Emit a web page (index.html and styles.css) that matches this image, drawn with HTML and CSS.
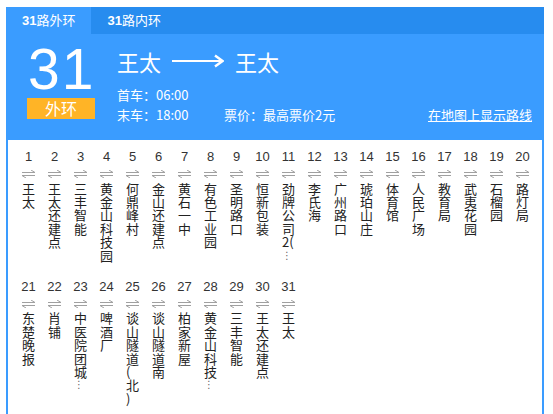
FILE: index.html
```html
<!DOCTYPE html>
<html lang="zh-CN">
<head>
<meta charset="utf-8">
<title>31路</title>
<link rel="stylesheet" href="styles.css">
</head>
<body>
<div class="wrap">
  <div class="tabs">
    <div class="tab active"><b>31</b>路外环</div>
    <div class="tab"><b>31</b>路内环</div>
  </div>
  <div class="head">
    <div class="route-no">
      <div class="big">31</div>
      <div class="badge">外环</div>
    </div>
    <div class="info">
      <div class="title">
        <span>王太</span>
        <svg class="arrow" width="52" height="14" viewBox="0 0 52 14"><path d="M0 7H49" stroke="#fff" stroke-width="2.2" fill="none"/><path d="M43 1.5L50.5 7L43 12.5" stroke="#fff" stroke-width="2.4" fill="none"/></svg>
        <span>王太</span>
      </div>
      <div class="line">首车：06:00</div>
      <div class="line"><span class="t1">末车：18:00</span><span>票价：最高票价2元</span><a class="map" href="#">在地图上显示路线</a></div>
    </div>
  </div>
  <div class="stops">
    <div class="stop"><span class="no">1</span><svg class="dir" width="13" height="8" viewBox="0 0 13 8"><path d="M0 2.5H13L9 0M13 5.5H0L4 8" stroke="#a0a0a0" fill="none"/></svg><span class="name">王太</span></div>
    <div class="stop"><span class="no">2</span><svg class="dir" width="13" height="8" viewBox="0 0 13 8"><path d="M0 2.5H13L9 0M13 5.5H0L4 8" stroke="#a0a0a0" fill="none"/></svg><span class="name">王太还建点</span></div>
    <div class="stop"><span class="no">3</span><svg class="dir" width="13" height="8" viewBox="0 0 13 8"><path d="M0 2.5H13L9 0M13 5.5H0L4 8" stroke="#a0a0a0" fill="none"/></svg><span class="name">三丰智能</span></div>
    <div class="stop"><span class="no">4</span><svg class="dir" width="13" height="8" viewBox="0 0 13 8"><path d="M0 2.5H13L9 0M13 5.5H0L4 8" stroke="#a0a0a0" fill="none"/></svg><span class="name">黄金山科技园</span></div>
    <div class="stop"><span class="no">5</span><svg class="dir" width="13" height="8" viewBox="0 0 13 8"><path d="M0 2.5H13L9 0M13 5.5H0L4 8" stroke="#a0a0a0" fill="none"/></svg><span class="name">何鼎峰村</span></div>
    <div class="stop"><span class="no">6</span><svg class="dir" width="13" height="8" viewBox="0 0 13 8"><path d="M0 2.5H13L9 0M13 5.5H0L4 8" stroke="#a0a0a0" fill="none"/></svg><span class="name">金山还建点</span></div>
    <div class="stop"><span class="no">7</span><svg class="dir" width="13" height="8" viewBox="0 0 13 8"><path d="M0 2.5H13L9 0M13 5.5H0L4 8" stroke="#a0a0a0" fill="none"/></svg><span class="name">黄石一中</span></div>
    <div class="stop"><span class="no">8</span><svg class="dir" width="13" height="8" viewBox="0 0 13 8"><path d="M0 2.5H13L9 0M13 5.5H0L4 8" stroke="#a0a0a0" fill="none"/></svg><span class="name">有色工业园</span></div>
    <div class="stop"><span class="no">9</span><svg class="dir" width="13" height="8" viewBox="0 0 13 8"><path d="M0 2.5H13L9 0M13 5.5H0L4 8" stroke="#a0a0a0" fill="none"/></svg><span class="name">圣明路口</span></div>
    <div class="stop"><span class="no">10</span><svg class="dir" width="13" height="8" viewBox="0 0 13 8"><path d="M0 2.5H13L9 0M13 5.5H0L4 8" stroke="#a0a0a0" fill="none"/></svg><span class="name">恒新包装</span></div>
    <div class="stop"><span class="no">11</span><svg class="dir" width="13" height="8" viewBox="0 0 13 8"><path d="M0 2.5H13L9 0M13 5.5H0L4 8" stroke="#a0a0a0" fill="none"/></svg><span class="name">劲牌公司2(<span class="more">⋮</span></span></div>
    <div class="stop"><span class="no">12</span><svg class="dir" width="13" height="8" viewBox="0 0 13 8"><path d="M0 2.5H13L9 0M13 5.5H0L4 8" stroke="#a0a0a0" fill="none"/></svg><span class="name">李氏海</span></div>
    <div class="stop"><span class="no">13</span><svg class="dir" width="13" height="8" viewBox="0 0 13 8"><path d="M0 2.5H13L9 0M13 5.5H0L4 8" stroke="#a0a0a0" fill="none"/></svg><span class="name">广州路口</span></div>
    <div class="stop"><span class="no">14</span><svg class="dir" width="13" height="8" viewBox="0 0 13 8"><path d="M0 2.5H13L9 0M13 5.5H0L4 8" stroke="#a0a0a0" fill="none"/></svg><span class="name">琥珀山庄</span></div>
    <div class="stop"><span class="no">15</span><svg class="dir" width="13" height="8" viewBox="0 0 13 8"><path d="M0 2.5H13L9 0M13 5.5H0L4 8" stroke="#a0a0a0" fill="none"/></svg><span class="name">体育馆</span></div>
    <div class="stop"><span class="no">16</span><svg class="dir" width="13" height="8" viewBox="0 0 13 8"><path d="M0 2.5H13L9 0M13 5.5H0L4 8" stroke="#a0a0a0" fill="none"/></svg><span class="name">人民广场</span></div>
    <div class="stop"><span class="no">17</span><svg class="dir" width="13" height="8" viewBox="0 0 13 8"><path d="M0 2.5H13L9 0M13 5.5H0L4 8" stroke="#a0a0a0" fill="none"/></svg><span class="name">教育局</span></div>
    <div class="stop"><span class="no">18</span><svg class="dir" width="13" height="8" viewBox="0 0 13 8"><path d="M0 2.5H13L9 0M13 5.5H0L4 8" stroke="#a0a0a0" fill="none"/></svg><span class="name">武夷花园</span></div>
    <div class="stop"><span class="no">19</span><svg class="dir" width="13" height="8" viewBox="0 0 13 8"><path d="M0 2.5H13L9 0M13 5.5H0L4 8" stroke="#a0a0a0" fill="none"/></svg><span class="name">石榴园</span></div>
    <div class="stop"><span class="no">20</span><svg class="dir" width="13" height="8" viewBox="0 0 13 8"><path d="M0 2.5H13L9 0M13 5.5H0L4 8" stroke="#a0a0a0" fill="none"/></svg><span class="name">路灯局</span></div>
    <div class="stop"><span class="no">21</span><svg class="dir" width="13" height="8" viewBox="0 0 13 8"><path d="M0 2.5H13L9 0M13 5.5H0L4 8" stroke="#a0a0a0" fill="none"/></svg><span class="name">东楚晚报</span></div>
    <div class="stop"><span class="no">22</span><svg class="dir" width="13" height="8" viewBox="0 0 13 8"><path d="M0 2.5H13L9 0M13 5.5H0L4 8" stroke="#a0a0a0" fill="none"/></svg><span class="name">肖铺</span></div>
    <div class="stop"><span class="no">23</span><svg class="dir" width="13" height="8" viewBox="0 0 13 8"><path d="M0 2.5H13L9 0M13 5.5H0L4 8" stroke="#a0a0a0" fill="none"/></svg><span class="name">中医院团城<span class="more">⋮</span></span></div>
    <div class="stop"><span class="no">24</span><svg class="dir" width="13" height="8" viewBox="0 0 13 8"><path d="M0 2.5H13L9 0M13 5.5H0L4 8" stroke="#a0a0a0" fill="none"/></svg><span class="name">啤酒厂</span></div>
    <div class="stop"><span class="no">25</span><svg class="dir" width="13" height="8" viewBox="0 0 13 8"><path d="M0 2.5H13L9 0M13 5.5H0L4 8" stroke="#a0a0a0" fill="none"/></svg><span class="name">谈山隧道(北)</span></div>
    <div class="stop"><span class="no">26</span><svg class="dir" width="13" height="8" viewBox="0 0 13 8"><path d="M0 2.5H13L9 0M13 5.5H0L4 8" stroke="#a0a0a0" fill="none"/></svg><span class="name">谈山隧道南</span></div>
    <div class="stop"><span class="no">27</span><svg class="dir" width="13" height="8" viewBox="0 0 13 8"><path d="M0 2.5H13L9 0M13 5.5H0L4 8" stroke="#a0a0a0" fill="none"/></svg><span class="name">柏家新屋</span></div>
    <div class="stop"><span class="no">28</span><svg class="dir" width="13" height="8" viewBox="0 0 13 8"><path d="M0 2.5H13L9 0M13 5.5H0L4 8" stroke="#a0a0a0" fill="none"/></svg><span class="name">黄金山科技<span class="more">⋮</span></span></div>
    <div class="stop"><span class="no">29</span><svg class="dir" width="13" height="8" viewBox="0 0 13 8"><path d="M0 2.5H13L9 0M13 5.5H0L4 8" stroke="#a0a0a0" fill="none"/></svg><span class="name">三丰智能</span></div>
    <div class="stop"><span class="no">30</span><svg class="dir" width="13" height="8" viewBox="0 0 13 8"><path d="M0 2.5H13L9 0M13 5.5H0L4 8" stroke="#a0a0a0" fill="none"/></svg><span class="name">王太还建点</span></div>
    <div class="stop"><span class="no">31</span><svg class="dir" width="13" height="8" viewBox="0 0 13 8"><path d="M0 2.5H13L9 0M13 5.5H0L4 8" stroke="#a0a0a0" fill="none"/></svg><span class="name">王太</span></div>
  </div>
</div>
</body>
</html>
```

FILE: styles.css
```css
html, body {
  margin: 0;
  padding: 0;
  height: 100%;
  overflow: hidden;
  background: #fff;
}

body {
  font-family: "Liberation Sans", "Noto Sans CJK SC", sans-serif;
  color: #333;
}

.wrap {
  margin: 7px 0 0 6px;
  width: 538px;
  height: calc(100% - 7px);
  display: flex;
  flex-direction: column;
}

.tabs {
  display: flex;
  height: 27px;
  background: #278cef;
}

.tab {
  padding: 0 16px 0 16px;
  line-height: 27px;
  font-size: 13px;
  color: #fff;
}

.tab b {
  font-weight: bold;
}

.tab.active {
  background: #3a9cff;
}

.head {
  display: flex;
  height: 106px;
  background: #3a9cff;
  color: #fff;
}

.route-no {
  margin-left: 21px;
  width: 68px;
  padding-top: 7px;
  display: flex;
  flex-direction: column;
}

.big {
  font-family: "Liberation Sans", sans-serif;
  font-size: 57px;
  line-height: 57px;
  height: 57px;
  padding-left: 1px;
  letter-spacing: 2px;
}

.badge {
  height: 21px;
  line-height: 21px;
  background: #ffb426;
  text-align: center;
  font-family: "Noto Sans CJK SC", sans-serif;
  font-size: 16px;
}

.info {
  flex: 1;
  margin-left: 22px;
  padding-right: 12px;
}

.title {
  display: flex;
  align-items: center;
  margin-top: 12px;
  margin-bottom: 9px;
  height: 30px;
  font-family: "Noto Sans CJK SC", sans-serif;
  font-size: 22px;
  line-height: 30px;
}

.arrow {
  margin: 0 11px 0 11px;
}

.line {
  display: flex;
  font-family: "Noto Sans CJK SC", sans-serif;
  font-size: 13px;
  line-height: 20px;
}

.t1 {
  width: 107px;
}

.map {
  margin-left: auto;
  color: #fff;
  text-decoration: underline;
}

.stops {
  flex: 1;
  border-left: 2px solid #3a9cff;
  border-right: 2px solid #3a9cff;
  padding: 9px 0 0 7.5px;
  display: grid;
  grid-template-columns: repeat(20, 26px);
  grid-auto-rows: min-content;
  row-gap: 17px;
  align-content: start;
}

.stop {
  display: flex;
  flex-direction: column;
  align-items: center;
}

.no {
  font-family: "Liberation Sans", sans-serif;
  font-size: 13px;
  line-height: 16px;
  color: #333;
}

.dir {
  display: block;
  margin-top: 5px;
}

.name {
  display: block;
  width: 13px;
  margin-top: 3.5px;
  font-family: "Noto Sans CJK SC", sans-serif;
  font-size: 13px;
  line-height: 13.4px;
  color: #222;
  line-break: anywhere;
  word-break: break-all;
}

.more {
  display: block;
  height: 13.4px;
  padding-top: 1px;
  box-sizing: border-box;
  font-family: "DejaVu Sans", sans-serif;
  font-size: 10px;
  line-height: 12px;
  color: #666;
}
```
